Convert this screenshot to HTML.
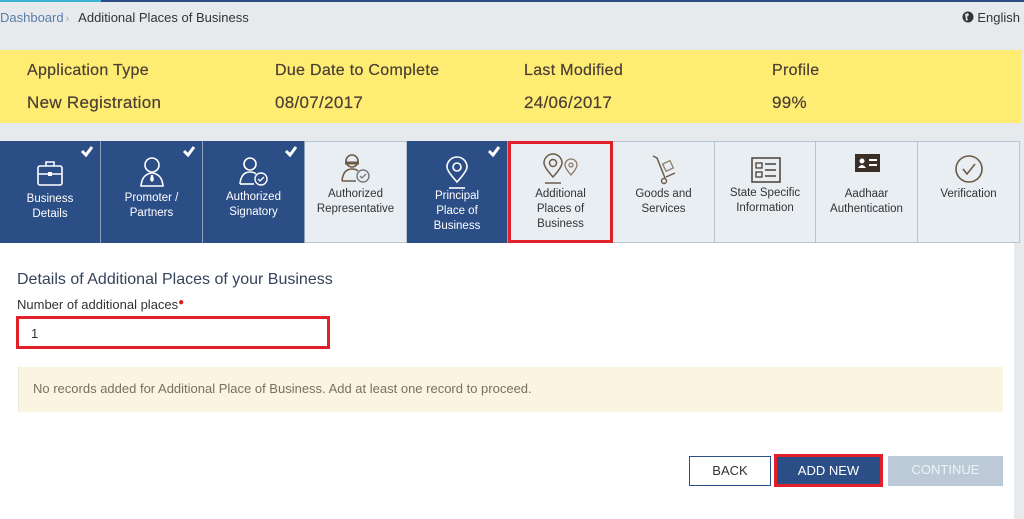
<!DOCTYPE html>
<html><head><style>
*{margin:0;padding:0;box-sizing:border-box}
body{width:1024px;height:519px;background:#e7eaed;font-family:"Liberation Sans",Verdana,sans-serif;position:relative;overflow:hidden}
.topbar{position:absolute;top:0;left:0;width:1024px;height:2px;background:#2c4e86}
.topbar i{position:absolute;left:0;top:0;width:101px;height:2px;background:#39b3cf}
.crumb{position:absolute;top:10px;left:0;font-size:13px;color:#333}
.crumb span{color:#5a7ca8}
.crumb b{font-weight:normal;color:#aaa;margin:0 6px 0 2px;font-size:11px}
.lang{position:absolute;top:10px;right:4px;font-size:13px;color:#333}
.yellow{position:absolute;top:50px;left:0;width:1021px;height:73px;background:#ffec73}
.yc{position:absolute;font-size:16px;color:#4a3f34;letter-spacing:.3px;-webkit-text-stroke:.2px #4a3f34}
.tabs{position:absolute;top:141px;left:0;height:102px;width:1020px}
.tab{position:absolute;top:0;height:102px;border-right:1px solid #8fa3bd;text-align:center;font-size:11.5px;line-height:15px}
.d{background:#2c4e86;color:#fff}
.l{background:#e9eef2;color:#333;border:1px solid #b7c4d2;border-left:none}
.tab svg{display:block;margin:0 auto}
.chk{position:absolute;right:6px;top:4px}
.panel{position:absolute;top:243px;left:0;width:1014px;height:276px;background:#fff}
h3{position:absolute;top:271px;left:17px;font-size:16px;font-weight:normal;color:#36435a}
.lab{position:absolute;top:297px;left:17px;font-size:13px;color:#333}
.lab i{color:#e02020;font-style:normal;font-size:10px;vertical-align:top}
.inp{position:absolute;top:316px;left:16px;width:314px;height:33px;border:3px solid #e2202c;font-size:13px;padding:7px 12px;color:#333}
.note{position:absolute;top:367px;left:18px;width:985px;height:45px;background:#fbf4e1;font-size:13px;color:#7a7060;padding:14px 14px;border-left:1px dotted #ddd}
.btn{position:absolute;top:456px;height:30px;font-size:13px;text-align:center;line-height:28px}
</style></head><body>
<div class="topbar"><i></i></div>
<div class="crumb"><span>Dashboard</span><b>›</b> Additional Places of Business</div>
<div class="lang"><svg width="12" height="12" viewBox="0 0 12 12" style="vertical-align:-1px"><circle cx="6" cy="6" r="5.5" fill="#333"/><path d="M3 3 L6 2 L7 4 L5 6 L6 9 L4 10 Z" fill="#ddd"/></svg> English</div>
<div class="yellow"></div>
<div class="yc" style="top:62px;left:27px">Application Type</div>
<div class="yc" style="top:93px;left:27px;font-size:17px">New Registration</div>
<div class="yc" style="top:62px;left:275px">Due Date to Complete</div>
<div class="yc" style="top:93px;left:275px;font-size:17px">08/07/2017</div>
<div class="yc" style="top:62px;left:524px">Last Modified</div>
<div class="yc" style="top:93px;left:524px;font-size:17px">24/06/2017</div>
<div class="yc" style="top:62px;left:772px">Profile</div>
<div class="yc" style="top:93px;left:772px;font-size:17px">99%</div>

<div class="tabs">
<div class="tab d" style="left:0;width:101px"><svg class="chk" width="14" height="12"><path d="M2 6 L6 10 L12 2" stroke="#fff" stroke-width="3" fill="none"/></svg>
<svg width="28" height="30" viewBox="0 0 28 30" style="margin-top:17px"><rect x="2" y="8" width="24" height="19" rx="2" stroke="#fff" stroke-width="1.6" fill="none"/><path d="M10 8V4h8v4M2 16h24" stroke="#fff" stroke-width="1.6" fill="none"/><rect x="12" y="14" width="4" height="4" fill="#fff"/></svg>
<div style="margin-top:4px">Business<br>Details</div></div>
<div class="tab d" style="left:101px;width:102px"><svg class="chk" width="14" height="12"><path d="M2 6 L6 10 L12 2" stroke="#fff" stroke-width="3" fill="none"/></svg>
<svg width="28" height="32" viewBox="0 0 28 32" style="margin-top:15px"><circle cx="14" cy="9" r="7" stroke="#fff" stroke-width="1.6" fill="none"/><path d="M3 30 Q4 18 14 17 Q24 18 25 30 Z" stroke="#fff" stroke-width="1.6" fill="none"/><path d="M13 19h2l1 5-2 2-2-2z" fill="#fff"/></svg>
<div style="margin-top:3px">Promoter /<br>Partners</div></div>
<div class="tab d" style="left:203px;width:102px"><svg class="chk" width="14" height="12"><path d="M2 6 L6 10 L12 2" stroke="#fff" stroke-width="3" fill="none"/></svg>
<svg width="32" height="32" viewBox="0 0 32 32" style="margin-top:15px"><circle cx="12" cy="8" r="6" stroke="#fff" stroke-width="1.6" fill="none"/><path d="M2 28 Q3 16 12 16 Q16 16 18 18" stroke="#fff" stroke-width="1.6" fill="none"/><path d="M2 28h14" stroke="#fff" stroke-width="1.6"/><circle cx="23" cy="23" r="6" stroke="#fff" stroke-width="1.4" fill="none"/><path d="M20 23l2 2 4-4" stroke="#fff" stroke-width="1.3" fill="none"/></svg>
<div style="margin-top:2px">Authorized<br>Signatory</div></div>
<div class="tab l" style="left:305px;width:102px"><svg width="32" height="32" viewBox="0 0 32 32" style="margin-top:11px"><circle cx="12" cy="8" r="6" stroke="#6b5a45" stroke-width="1.6" fill="none"/><path d="M5 10h14" stroke="#6b5a45" stroke-width="3"/><path d="M2 28 Q3 16 12 16 Q16 16 18 18M2 28h14" stroke="#6b5a45" stroke-width="1.6" fill="none"/><circle cx="23" cy="23" r="6" stroke="#777" stroke-width="1.4" fill="none"/><path d="M20 23l2 2 4-4" stroke="#777" stroke-width="1.3" fill="none"/></svg>
<div style="margin-top:2px">Authorized<br>Representative</div></div>
<div class="tab d" style="left:407px;width:101px"><svg class="chk" width="14" height="12"><path d="M2 6 L6 10 L12 2" stroke="#fff" stroke-width="3" fill="none"/></svg>
<svg width="26" height="34" viewBox="0 0 26 34" style="margin-top:15px"><path d="M13 26 Q3 15 3 11 A10 10 0 0 1 23 11 Q23 15 13 26Z" stroke="#fff" stroke-width="1.6" fill="none"/><circle cx="13" cy="11" r="4" stroke="#fff" stroke-width="1.6" fill="none"/><path d="M5 32h16" stroke="#fff" stroke-width="1.6"/></svg>
<div style="margin-top:-1px">Principal<br>Place of<br>Business</div></div>
<div class="tab l" style="left:508px;width:105px;border:3px solid #e2202c;height:102px"><svg width="40" height="34" viewBox="0 0 40 34" style="margin-top:9px"><path d="M12 24 Q3 14 3 10 A9 9 0 0 1 21 10 Q21 14 12 24Z" stroke="#6b5a45" stroke-width="1.5" fill="none"/><circle cx="12" cy="10" r="3.5" stroke="#6b5a45" stroke-width="1.5" fill="none"/><path d="M4 30h16" stroke="#6b5a45" stroke-width="1.5"/><path d="M30 22 Q24 15 24 12 A6 6 0 0 1 36 12 Q36 15 30 22Z" stroke="#8a7a65" stroke-width="1.3" fill="none"/><circle cx="30" cy="12" r="2" stroke="#8a7a65" stroke-width="1.3" fill="none"/></svg>
<div style="margin-top:0px">Additional<br>Places of<br>Business</div></div>
<div class="tab l" style="left:613px;width:102px"><svg width="30" height="34" viewBox="0 0 30 34" style="margin-top:10px"><path d="M4 4 L8 6 L16 26" stroke="#6b5a45" stroke-width="1.5" fill="none"/><circle cx="15" cy="29" r="2.5" stroke="#6b5a45" stroke-width="1.4" fill="none"/><rect x="15" y="10" width="8" height="8" transform="rotate(-25 19 14)" stroke="#8a7a65" stroke-width="1.3" fill="none"/><path d="M17 25l9-4" stroke="#6b5a45" stroke-width="1.4"/></svg>
<div style="margin-top:1px">Goods and<br>Services</div></div>
<div class="tab l" style="left:715px;width:101px"><svg width="32" height="30" viewBox="0 0 32 30" style="margin-top:13px"><rect x="3" y="3" width="28" height="24" stroke="#4a3f34" stroke-width="1.5" fill="none"/><rect x="7" y="8" width="6" height="5" stroke="#4a3f34" stroke-width="1.3" fill="none"/><rect x="7" y="17" width="6" height="5" stroke="#4a3f34" stroke-width="1.3" fill="none"/><path d="M16 9h11M16 15h11M16 21h11" stroke="#4a3f34" stroke-width="1.4"/></svg>
<div style="margin-top:1px">State Specific<br>Information</div></div>
<div class="tab l" style="left:816px;width:102px"><svg width="32" height="30" viewBox="0 0 32 30" style="margin-top:10px"><rect x="4" y="2" width="25" height="18" fill="#3a2e25"/><circle cx="11" cy="9" r="2.5" fill="#fff"/><path d="M7 16q4-6 8 0z" fill="#fff"/><path d="M18 8h8M18 13h8" stroke="#fff" stroke-width="2"/></svg>
<div style="margin-top:5px">Aadhaar<br>Authentication</div></div>
<div class="tab l" style="left:918px;width:102px"><svg width="32" height="32" viewBox="0 0 32 32" style="margin-top:11px"><circle cx="16" cy="16" r="13" stroke="#6b5a45" stroke-width="1.6" fill="none"/><path d="M10 16l4 5 8-10" stroke="#6b5a45" stroke-width="1.6" fill="none"/></svg>
<div style="margin-top:2px">Verification</div></div>
</div>

<div class="panel"></div>
<h3>Details of Additional Places of your Business</h3>
<div class="lab">Number of additional places<i>●</i></div>
<div class="inp">1</div>
<div class="note">No records added for Additional Place of Business. Add at least one record to proceed.</div>
<div class="btn" style="left:689px;width:82px;border:1px solid #2c4e86;color:#333;background:#fff">BACK</div>
<div class="btn" style="left:774px;width:109px;height:33px;top:454px;border:3px solid #e2202c;background:#2c4e86;color:#fff;line-height:27px">ADD NEW</div>
<div class="btn" style="left:888px;width:115px;background:#bccad8;color:#eef2f6">CONTINUE</div>
</body></html>
